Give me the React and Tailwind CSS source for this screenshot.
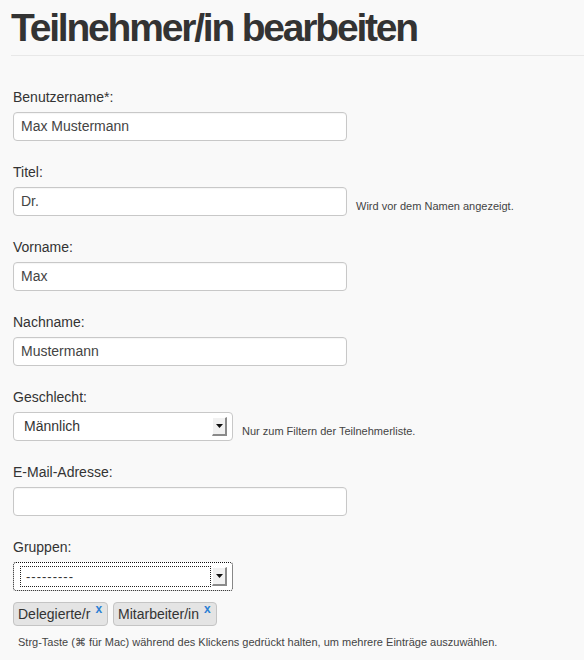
import React from 'react';

const font = { fontFamily: '"Liberation Sans", Arial, sans-serif' };

const Label = ({ children }) => (
    <div className="text-[14px] leading-[20px] text-[#333] mb-[5px]">{children}</div>
);

const TextInput = ({ value, width = 'w-[334px]' }) => (
    <div className={`${width} h-[29px] bg-white border border-[#c8c8c8] rounded-[4px] flex items-center px-[7px] text-[14px] text-[#444] shadow-[inset_0_1px_1px_rgba(0,0,0,0.04)]`}>
        {value}
    </div>
);

const Hint = ({ children }) => (
    <span className="text-[11px] leading-[14px] text-[#444] ml-[9px] mb-[3px]">{children}</span>
);

const ArrowButton = () => (
    <div className="w-[15px] h-[19px] bg-[#f1f1f1] border-t border-l border-t-[#fff] border-l-[#fff] border-r-2 border-b-2 border-r-[#8a8a8a] border-b-[#8a8a8a] flex items-center justify-center">
        <svg width="7" height="4" viewBox="0 0 7 4"><polygon points="0,0 7,0 3.5,4" fill="#111" /></svg>
    </div>
);

const Field = ({ label, children }) => (
    <div className="mb-[21px]">
        <Label>{label}</Label>
        {children}
    </div>
);

export default function App() {
    return (
        <div className="min-h-[660px] bg-[#f9f9f9] text-[#333]" style={font}>
            <h1 className="text-[39px] leading-[44px] font-bold text-[#333] pl-[11px] pt-[6px] tracking-[-2.2px]">
                Teilnehmer/in bearbeiten
            </h1>
            <div className="ml-[11px] mt-[5px] border-t border-[#e8e8e8]" />

            <div className="pl-[13px] pt-[31px]">
                <Field label="Benutzername*:">
                    <TextInput value="Max Mustermann" />
                </Field>

                <Field label="Titel:">
                    <div className="flex items-end">
                        <TextInput value="Dr." />
                        <Hint>Wird vor dem Namen angezeigt.</Hint>
                    </div>
                </Field>

                <Field label="Vorname:">
                    <TextInput value="Max" />
                </Field>

                <Field label="Nachname:">
                    <TextInput value="Mustermann" />
                </Field>

                <Field label="Geschlecht:">
                    <div className="flex items-end">
                        <div className="w-[220px] h-[29px] bg-white border border-[#c8c8c8] rounded-[4px] flex items-center justify-between pl-[10px] pr-[5px] text-[14px] text-[#333]">
                            <span>Männlich</span>
                            <ArrowButton />
                        </div>
                        <Hint>Nur zum Filtern der Teilnehmerliste.</Hint>
                    </div>
                </Field>

                <Field label="E-Mail-Adresse:">
                    <TextInput value="" />
                </Field>

                <div>
                    <Label>Gruppen:</Label>
                    <div className="w-[220px] h-[29px] bg-white border border-dotted border-[#111] rounded-[3px] flex items-center justify-between pl-[6px] pr-[5px]">
                        <div className="flex-1 h-[21px] border border-dotted border-[#222] flex items-center pl-[5px] text-[13px] leading-none tracking-[1px] text-[#333] mr-[1px]">
                            ---------
                        </div>
                        <ArrowButton />
                    </div>
                    <div className="flex gap-[5px] mt-[11px]">
                        {['Delegierte/r', 'Mitarbeiter/in'].map((g) => (
                            <div key={g} className="h-[24px] bg-[#e4e4e4] border border-[#c4c4c4] rounded-[4px] flex items-start pl-[4px] pr-[5px] text-[14px] text-[#333]">
                                <span className="leading-[23px]">{g}</span>
                                <span className="ml-[5px] text-[12px] leading-[12px] font-bold text-[#2a7fd4]">x</span>
                            </div>
                        ))}
                    </div>
                    <div className="text-[11px] leading-[14px] text-[#444] mt-[9px] pl-[5px]">
                        Strg-Taste (⌘ für Mac) während des Klickens gedrückt halten, um mehrere Einträge auszuwählen.
                    </div>
                </div>
            </div>
        </div>
    );
}
